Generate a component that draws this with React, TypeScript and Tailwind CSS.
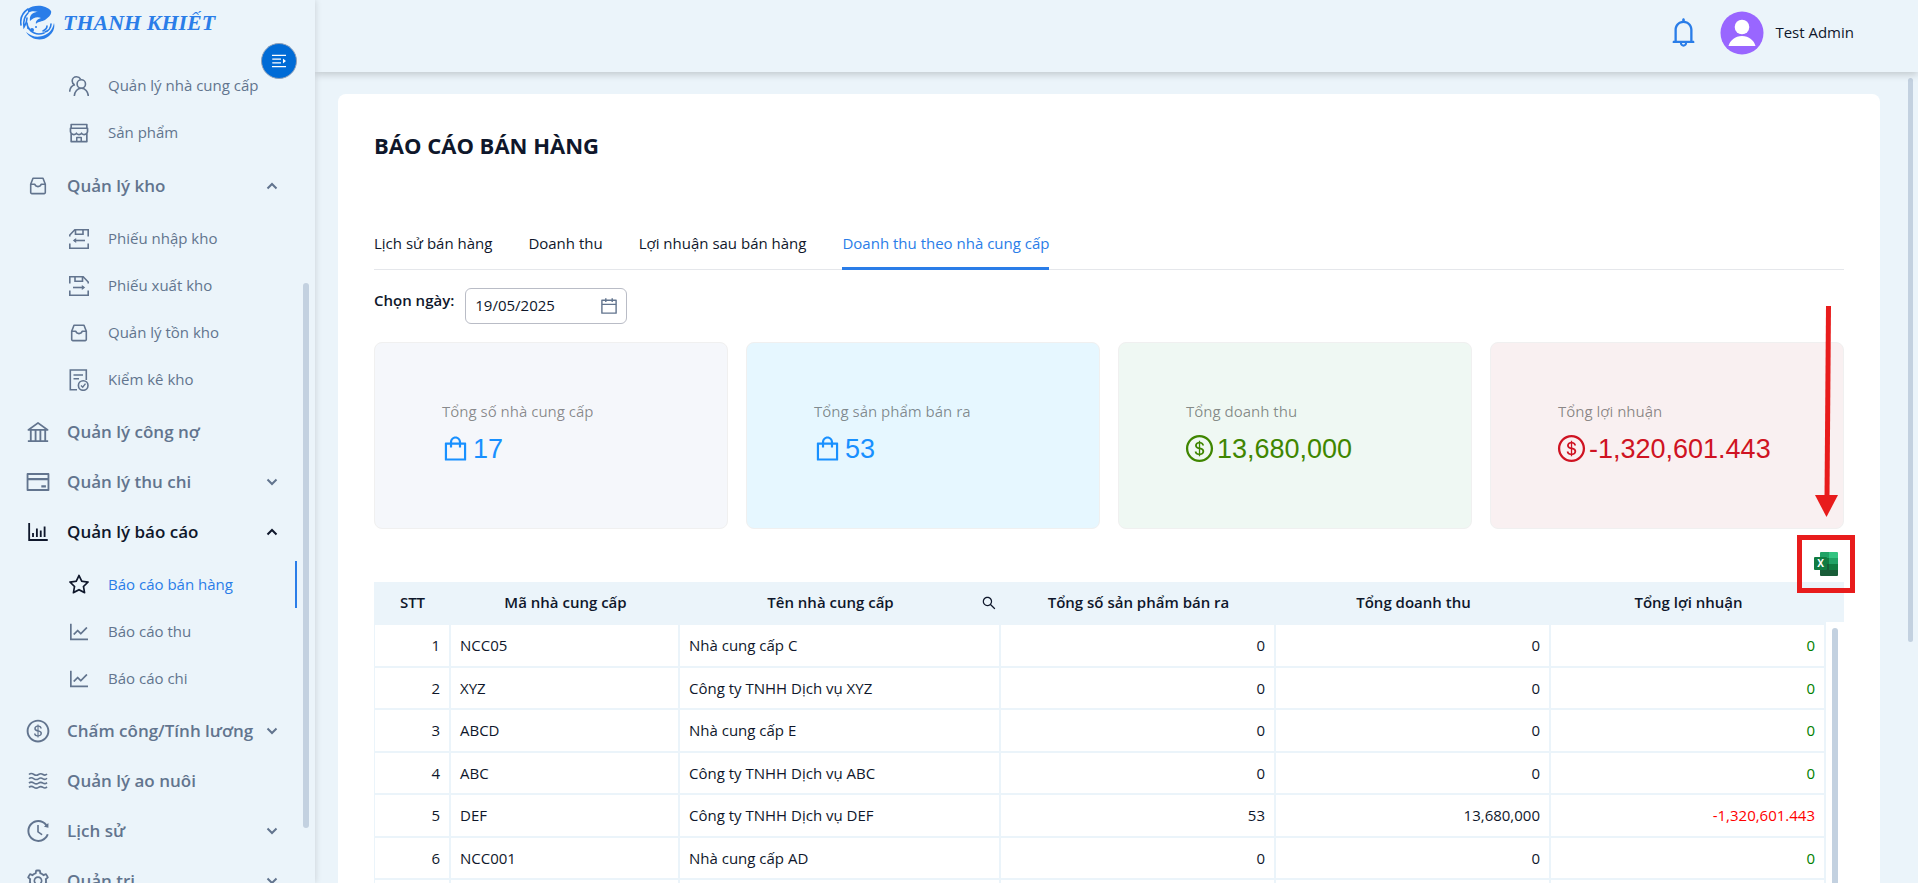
import { useState } from 'react'
import type { ReactNode } from 'react'
import {
  AiOutlineBank,
  AiOutlineBarChart,
  AiOutlineBell,
  AiOutlineCalendar,
  AiOutlineCreditCard,
  AiOutlineDollar,
  AiOutlineHistory,
  AiOutlineLineChart,
  AiOutlineMenuFold,
  AiOutlineSearch,
  AiOutlineSetting,
  AiOutlineShop,
  AiOutlineShopping,
  AiOutlineStar,
} from 'react-icons/ai'

function LogoMark() {
  return (
    <svg viewBox="0 0 36 36" className="w-9 h-9 shrink-0 text-[#2a7de8]" fill="none" stroke="currentColor" strokeLinecap="round">
      <path d="M8 4C13 0 25-1 31 6c1 3-2 6-6 9-3 2-7 1-9 4-1-3 2-5 5-6-4-2-8 0-11 3-1-6 3-9 8-9-4-1-7-1-10 1z" fill="currentColor" stroke="none" />
      <path d="M8 4C2 8 0 14 1 20" strokeWidth="1.6" />
      <path d="M8 8C4 12 3 16 4 22c2-3 3-6 3-9" strokeWidth="1.6" />
      <path d="M7 18c0 3 1 5 3 7 4 4 9 5 14 3" strokeWidth="1.6" />
      <path d="M6 27c5 8 16 10 23 4 5-4 6-9 5-13-1 5-4 10-9 12-7 3-13 2-19-3z" fill="currentColor" stroke="none" />
      <path d="M31 19c0 4-3 7-6 8M27 21c0 2-2 4-4 5" strokeWidth="1.6" />
      <circle cx="12" cy="25" r="2" fill="currentColor" stroke="none" />
      <circle cx="8" cy="23" r="1" fill="currentColor" stroke="none" />
      <circle cx="16" cy="22" r="1" fill="currentColor" stroke="none" />
    </svg>
  )
}

function SupplierIcon() {
  return (
    <svg viewBox="0 0 20 20" className="w-5 h-5" fill="none" stroke="currentColor" strokeWidth="1.6">
      <circle cx="12.3" cy="8" r="4.2" />
      <path d="M5.3 20c.2-4.500 3.200-7.800 7-7.800s6.800 3.300 7 7.800" />
      <path d="M11.600 3.200C10.800 1.700 9.300.8 7.500.8 5 .8 3.200 2.600 3.200 5c0 1.700.9 3.100 2.300 3.800M6 8.700C3 9.500.8 12 .7 15.800" />
    </svg>
  )
}

function BoxIcon() {
  return (
    <svg viewBox="0 0 20 20" className="w-5 h-5" fill="none" stroke="currentColor" strokeWidth="1.600" strokeLinejoin="round">
      <path d="M2.700 8.200 5 2.300h10l2.300 5.900v8.400a1 1 0 0 1-1 1H3.700a1 1 0 0 1-1-1z" />
      <path d="M2.700 8.200h4.100c.3 1.500 1.500 2.400 3.200 2.400s2.900-.9 3.200-2.400h4.100" />
    </svg>
  )
}

function StockInIcon() {
  return (
    <svg viewBox="0 0 20 20" className="w-5 h-5" fill="none" stroke="currentColor" strokeWidth="1.600">
      <path d="M.8 7.500V6L5.800.8h13.400v6.700M6.500 1v4.200h7.500V1M.8 14.500v4.700h18.400v-4.700" />
      <path d="M16 11.500H5" />
      <path d="m3.800 11.500 3.400-2.400v4.800z" fill="currentColor" stroke="none" />
    </svg>
  )
}

function StockOutIcon() {
  return (
    <svg viewBox="0 0 20 20" className="w-5 h-5" fill="none" stroke="currentColor" strokeWidth="1.600">
      <path d="M19.200 7.500V6l-5-5.200H.8v6.700M6 1v4.200h7.500V1M.8 14.500v4.700h18.400v-4.700" />
      <path d="M4 11.500h11" />
      <path d="m16.200 11.500-3.400-2.400v4.800z" fill="currentColor" stroke="none" />
    </svg>
  )
}

function StocktakeIcon() {
  return (
    <svg viewBox="0 0 20 22" className="w-5 h-[22px]" fill="none" stroke="currentColor" strokeWidth="1.600">
      <path d="M8 20.700H1.300V1h16v10M4.500 6h9.500M4.500 9.700H10" />
      <circle cx="14.200" cy="16.500" r="4.800" />
      <path d="m12 16.500 1.700 1.700 2.800-3.600" strokeWidth="1.400" />
    </svg>
  )
}

function WavesIcon() {
  return (
    <svg viewBox="0 0 20 20" className="w-5 h-5" fill="none" stroke="currentColor" strokeWidth="1.600">
      {[3.5, 7.8, 12.1, 16.4].map((y) => (
        <path key={y} d={`M1 ${y}c2-2 3.500-1 5 0s3 1 4.500 0 3-1 4.500 0 2.500 1 4-.5`} />
      ))}
    </svg>
  )
}

function Chevron({ open }: { open: boolean }) {
  return (
    <svg viewBox="0 0 12 12" className="w-3 h-3" fill="none" stroke="currentColor" strokeWidth="2">
      <path d={open ? 'M1.500 8.500 6 4l4.500 4.500' : 'M1.500 3.500 6 8l4.500-4.500'} />
    </svg>
  )
}

function ExcelIcon() {
  return (
    <svg viewBox="0 0 24 24" className="w-6 h-6">
      <path d="M7 0h8v6H6V1a1 1 0 0 1 1-1z" fill="#21a366" />
      <path d="M15 0h8a1 1 0 0 1 1 1v5h-9z" fill="#33c481" />
      <path d="M6 6h9v6H6z" fill="#107c41" />
      <path d="M15 6h9v6h-9z" fill="#21a366" />
      <path d="M6 12h9v6H6z" fill="#185c37" />
      <path d="M15 12h9v6h-9z" fill="#107c41" />
      <path d="M6 18h18v5a1 1 0 0 1-1 1H7a1 1 0 0 1-1-1z" fill="#185c37" />
      <rect x="0" y="5" width="13" height="13" rx="1" fill="#107c41" />
      <text x="6.500" y="15" textAnchor="middle" fontSize="10" fontWeight="700" fill="#fff">X</text>
    </svg>
  )
}

type SubItem = { label: string; icon: ReactNode; active?: boolean }
type MenuGroup = { label: string; icon: ReactNode; expandable?: boolean; active?: boolean; items?: SubItem[] }

const TOP_ITEMS: SubItem[] = [
  { label: 'Quản lý nhà cung cấp', icon: <SupplierIcon /> },
  { label: 'Sản phẩm', icon: <AiOutlineShop /> },
]

const MENU: MenuGroup[] = [
  {
    label: 'Quản lý kho',
    icon: <BoxIcon />,
    expandable: true,
    items: [
      { label: 'Phiếu nhập kho', icon: <StockInIcon /> },
      { label: 'Phiếu xuất kho', icon: <StockOutIcon /> },
      { label: 'Quản lý tồn kho', icon: <BoxIcon /> },
      { label: 'Kiểm kê kho', icon: <StocktakeIcon /> },
    ],
  },
  { label: 'Quản lý công nợ', icon: <AiOutlineBank /> },
  { label: 'Quản lý thu chi', icon: <AiOutlineCreditCard />, expandable: true },
  {
    label: 'Quản lý báo cáo',
    icon: <AiOutlineBarChart />,
    expandable: true,
    active: true,
    items: [
      { label: 'Báo cáo bán hàng', icon: <AiOutlineStar />, active: true },
      { label: 'Báo cáo thu', icon: <AiOutlineLineChart /> },
      { label: 'Báo cáo chi', icon: <AiOutlineLineChart /> },
    ],
  },
  { label: 'Chấm công/Tính lương', icon: <AiOutlineDollar />, expandable: true },
  { label: 'Quản lý ao nuôi', icon: <WavesIcon /> },
  { label: 'Lịch sử', icon: <AiOutlineHistory />, expandable: true },
  { label: 'Quản trị', icon: <AiOutlineSetting />, expandable: true },
]

const TABS = ['Lịch sử bán hàng', 'Doanh thu', 'Lợi nhuận sau bán hàng', 'Doanh thu theo nhà cung cấp']

const STATS = [
  { label: 'Tổng số nhà cung cấp', value: '17', icon: <AiOutlineShopping />, card: 'bg-[#f5f7fb]', text: 'text-[#1890ff]' },
  { label: 'Tổng sản phẩm bán ra', value: '53', icon: <AiOutlineShopping />, card: 'bg-[#e6f7ff]', text: 'text-[#1890ff]' },
  { label: 'Tổng doanh thu', value: '13,680,000', icon: <AiOutlineDollar />, card: 'bg-[#eff8f3]', text: 'text-[#3f8600]' },
  { label: 'Tổng lợi nhuận', value: '-1,320,601.443', icon: <AiOutlineDollar />, card: 'bg-[#f9f0f1]', text: 'text-[#cf1322]' },
]

const ROWS = [
  { code: 'NCC05', name: 'Nhà cung cấp C', sold: '0', revenue: '0', profit: '0' },
  { code: 'XYZ', name: 'Công ty TNHH Dịch vụ XYZ', sold: '0', revenue: '0', profit: '0' },
  { code: 'ABCD', name: 'Nhà cung cấp E', sold: '0', revenue: '0', profit: '0' },
  { code: 'ABC', name: 'Công ty TNHH Dịch vụ ABC', sold: '0', revenue: '0', profit: '0' },
  { code: 'DEF', name: 'Công ty TNHH Dịch vụ DEF', sold: '53', revenue: '13,680,000', profit: '-1,320,601.443' },
  { code: 'NCC001', name: 'Nhà cung cấp AD', sold: '0', revenue: '0', profit: '0' },
  { code: '', name: '', sold: '', revenue: '', profit: '' },
]

function SubLink({ item }: { item: SubItem }) {
  return (
    <a
      href="#"
      className={`flex items-center h-[47px] pl-[67px] text-[15px] whitespace-nowrap border-r-2 ${
        item.active ? 'text-[#2a7de8] border-[#2a7de8]' : 'text-slate-500 border-transparent'
      }`}
    >
      <span className={`w-6 mr-[17px] flex justify-center text-2xl ${item.active ? 'text-slate-900' : ''}`}>{item.icon}</span>
      {item.label}
    </a>
  )
}

function Sidebar() {
  return (
    <aside className="relative z-20 w-[315px] shrink-0 flex flex-col bg-[#ebf4fa] shadow-[1px_0_6px_rgba(0,0,0,0.12)]">
      <div className="flex items-center h-[62px] pl-5 pb-4 shrink-0">
        <LogoMark />
        <span className="ml-[7px] font-['Liberation_Serif',serif] font-bold italic text-[22px] leading-none text-[#2a7de8] whitespace-nowrap">
          THANH KHIẾT
        </span>
      </div>
      <button
        aria-label="Thu gọn menu"
        className="absolute top-[43px] right-[18px] w-9 h-9 rounded-full bg-[#006bd6] text-white text-lg flex items-center justify-center border border-slate-400"
      >
        <AiOutlineMenuFold className="-scale-x-100" />
      </button>
      <div className="flex flex-1 min-h-0 overflow-hidden">
        <nav className="w-[297px]">
          {TOP_ITEMS.map((item) => <SubLink key={item.label} item={item} />)}
          <div className="h-[5px]" />
          {MENU.map((group) => (
            <div key={group.label}>
              <button
                className={`flex items-center w-full h-[50px] pl-[25px] pr-[19px] text-[17px] font-semibold whitespace-nowrap ${
                  group.active ? 'text-slate-900' : 'text-slate-500'
                }`}
              >
                <span className="w-[26px] mr-4 flex justify-center text-[26px]">{group.icon}</span>
                <span className="flex-1 text-left">{group.label}</span>
                {group.expandable && <Chevron open={!!group.items} />}
              </button>
              {group.items && (
                <div className="py-1">
                  {group.items.map((item) => <SubLink key={item.label} item={item} />)}
                </div>
              )}
            </div>
          ))}
        </nav>
        <div className="w-[6px] h-[545px] ml-[6px] mt-[221px] rounded-full bg-[#c3d1e0]" />
      </div>
    </aside>
  )
}

function Header() {
  return (
    <header className="relative z-10 h-[72px] shrink-0 flex items-center justify-end pr-16 pb-[7px] bg-[#ebf4fa] shadow-[0_2px_8px_rgba(0,0,0,0.2)]">
      <button aria-label="Thông báo" className="text-[33px] text-[#2a7de8] mr-5">
        <AiOutlineBell />
      </button>
      <svg viewBox="0 0 44 44" className="w-11 h-11 mr-[11px]">
        <circle cx="22" cy="22" r="21.500" fill="#9966ff" />
        <circle cx="22" cy="16" r="7.300" fill="#fff" />
        <path d="M8.500 35c1.500-5.500 6.500-10 13.500-10s12 4.500 13.500 10z" fill="#fff" />
      </svg>
      <span className="text-[15px] text-slate-900">Test Admin</span>
    </header>
  )
}

function SupplierTable() {
  const th = 'h-[43px] pb-[2px] font-semibold'
  const td = 'px-[9px] border-b-2 border-r-2 border-[#ebf4fa]'
  return (
    <div className="flex">
      <div className="flex-1 min-w-0">
        <table className="w-full table-fixed border-separate border-spacing-0 text-[15px] text-slate-900">
          <colgroup>
            <col className="w-[77px]" />
            <col className="w-[229px]" />
            <col className="w-[321px]" />
            <col />
            <col />
            <col />
          </colgroup>
          <thead className="bg-[#ebf4fa]">
            <tr>
              <th className={th}>STT</th>
              <th className={th}>Mã nhà cung cấp</th>
              <th className={th}>
                <div className="flex items-center pr-1">
                  <span className="flex-1">Tên nhà cung cấp</span>
                  <button aria-label="Tìm kiếm" className="text-base"><AiOutlineSearch /></button>
                </div>
              </th>
              <th className={th}>Tổng số sản phẩm bán ra</th>
              <th className={th}>Tổng doanh thu</th>
              <th className={th}>Tổng lợi nhuận</th>
            </tr>
          </thead>
          <tbody>
            {ROWS.map((row, i) => (
              <tr key={i} className="odd:h-[43px] even:h-[42px]">
                <td className={`${td} border-l text-right`}>{row.code && i + 1}</td>
                <td className={td}>{row.code}</td>
                <td className={td}>{row.name}</td>
                <td className={`${td} text-right`}>{row.sold}</td>
                <td className={`${td} text-right`}>{row.revenue}</td>
                <td className={`${td} text-right ${row.profit.startsWith('-') ? 'text-[#ff0000]' : 'text-[#008000]'}`}>{row.profit}</td>
              </tr>
            ))}
          </tbody>
        </table>
      </div>
      <div className="w-[18px] flex flex-col">
        <div className="h-10 bg-[#ebf4fa]" />
        <div className="flex-1 w-[6px] ml-[6px] mt-[6px] rounded-t-full bg-[#c3d1e0]" />
      </div>
    </div>
  )
}

export default function App() {
  const [tab, setTab] = useState(3)
  const [date, setDate] = useState('19/05/2025')

  return (
    <div className="flex h-screen overflow-hidden bg-[#ebf4fa] font-['Open_Sans','Noto_Sans',sans-serif]">
      <Sidebar />
      <div className="flex-1 min-w-0 flex flex-col">
        <Header />
        <div className="flex flex-1 min-h-0 overflow-hidden">
          <main className="flex-1 min-w-0 ml-[23px] mt-[22px] self-start rounded-lg bg-white px-9 pt-[35px]">
            <h1 className="text-[22px] leading-8 font-bold text-slate-900">BÁO CÁO BÁN HÀNG</h1>

            <div role="tablist" className="mt-[57px] flex gap-9 border-b border-gray-200">
              {TABS.map((label, i) => (
                <button
                  key={label}
                  role="tab"
                  aria-selected={tab === i}
                  onClick={() => setTab(i)}
                  className={`h-[52px] pt-px -mb-px border-b-3 text-[15px] ${
                    tab === i ? 'text-[#2a7de8] border-[#2a7de8]' : 'text-slate-900 border-transparent'
                  }`}
                >
                  {label}
                </button>
              ))}
            </div>

            <div className="mt-[18px] flex items-start gap-[11px]">
              <label htmlFor="date" className="text-[15px] leading-6 font-semibold text-slate-900">Chọn ngày:</label>
              <div className="flex items-center w-[162px] h-9 pl-[9px] pr-[7px] rounded-md border border-[#b9bcc6] bg-white">
                <input
                  id="date"
                  value={date}
                  onChange={(e) => setDate(e.target.value)}
                  className="flex-1 min-w-0 pb-px text-[15px] text-slate-900 outline-none"
                />
                <AiOutlineCalendar className="text-xl text-slate-500" />
              </div>
            </div>

            <div className="mt-[18px] grid grid-cols-4 gap-[18px]">
              {STATS.map((s) => (
                <div key={s.label} className={`h-[187px] pl-[67px] pb-1 flex flex-col justify-center rounded-lg border border-[#f0f0f0] ${s.card}`}>
                  <div className="text-[15px] leading-6 text-black/45">{s.label}</div>
                  <div className={`mt-[6px] flex items-center gap-1 font-['Liberation_Sans',sans-serif] text-[27px] leading-10 ${s.text}`}>
                    <span className="-mx-[2px] text-[31px]">{s.icon}</span>
                    {s.value}
                  </div>
                </div>
              ))}
            </div>

            <div className="flex justify-end h-[53px] pt-[23px] pr-[6px]">
              <button aria-label="Xuất Excel" className="relative w-6 h-6">
                <ExcelIcon />
                <span className="absolute -inset-[17px] border-5 border-[#e81c1c]" />
                <svg viewBox="0 0 24 214" className="absolute left-px -top-[247px] w-6 h-[214px] max-w-none">
                  <path d="M13.500 1 12 192" stroke="#e81c1c" strokeWidth="5" />
                  <path d="M0 190h23L11.500 212z" fill="#e81c1c" />
                </svg>
              </button>
            </div>
            <SupplierTable />
          </main>
          <div className="w-[38px] pl-7 pt-[6px]">
            <div className="w-[5px] h-[564px] rounded-full bg-[#c3d1e0]" />
          </div>
        </div>
      </div>
    </div>
  )
}
